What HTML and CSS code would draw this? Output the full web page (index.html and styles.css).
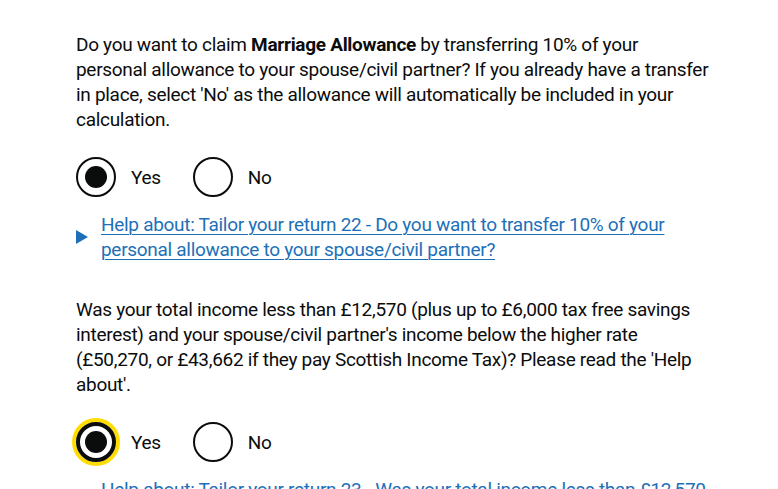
FILE: index.html
```html
<!DOCTYPE html>
<html lang="en">

<head>
  <meta charset="UTF-8">
  <title>Tailor your return</title>
  <link rel="stylesheet" href="styles.css">
</head>

<body>
  <div class="page">

    <div class="question">
      <p class="hint">Do you want to claim <b>Marriage Allowance</b> by transferring 10% of your personal allowance to your spouse/civil partner? If you already have a transfer in place, select 'No' as the allowance will automatically be included in your calculation.</p>
      <div class="radios">
        <label class="radio">
          <span class="circle checked"></span>
          <span class="radio-label">Yes</span>
        </label>
        <label class="radio">
          <span class="circle"></span>
          <span class="radio-label">No</span>
        </label>
      </div>
      <div class="details">
        <span class="arrow"></span>
        <a href="#" class="details-link">Help about: Tailor your return 22 - Do you want to transfer 10% of your personal allowance to your spouse/civil partner?</a>
      </div>
    </div>

    <div class="question">
      <p class="hint">Was your total income less than £12,570 (plus up to £6,000 tax free savings interest) and your spouse/civil partner's income below the higher rate (£50,270, or £43,662 if they pay Scottish Income Tax)? Please read the 'Help about'.</p>
      <div class="radios">
        <label class="radio">
          <span class="circle checked focused"></span>
          <span class="radio-label">Yes</span>
        </label>
        <label class="radio">
          <span class="circle"></span>
          <span class="radio-label">No</span>
        </label>
      </div>
      <div class="details">
        <span class="arrow"></span>
        <a href="#" class="details-link">Help about: Tailor your return 23 - Was your total income less than £12,570 (plus up to £6,000 tax free savings interest)?</a>
      </div>
    </div>

  </div>
</body>

</html>
```
FILE: styles.css
```css
* {
  margin: 0;
  padding: 0;
  box-sizing: border-box;
}

body {
  background: #ffffff;
  color: #0b0c0c;
  font-family: Roboto, "Liberation Sans", sans-serif;
  font-size: 19px;
  line-height: 25px;
  letter-spacing: -0.3px;
}

.page {
  width: 634px;
  margin-left: 76px;
  padding-top: 32px;
}

.question {
  margin-bottom: 35px;
}

.hint b {
  font-weight: 700;
}

.radios {
  display: flex;
  margin-top: 25px;
}

.radio {
  display: flex;
  align-items: center;
  margin-right: 20px;
}

.circle {
  width: 40px;
  height: 40px;
  border: 2px solid #0b0c0c;
  border-radius: 50%;
  display: flex;
  align-items: center;
  justify-content: center;
}

.circle.checked::after {
  content: "";
  width: 22px;
  height: 22px;
  border-radius: 50%;
  background: #0b0c0c;
}

.circle.focused {
  border-width: 4px;
  box-shadow: 0 0 0 4px #ffdd00;
}

.radio-label {
  padding: 0 12px 0 15px;
}

.details {
  display: flex;
  align-items: center;
  margin-top: 15px;
}

.arrow {
  flex: none;
  width: 0;
  height: 0;
  border-top: 7px solid transparent;
  border-bottom: 7px solid transparent;
  border-left: 12px solid #1d70b8;
  margin-right: 13px;
}

.details-link {
  color: #1d70b8;
  text-decoration: underline;
  text-decoration-thickness: 1px;
  text-underline-offset: 3px;
}
```
